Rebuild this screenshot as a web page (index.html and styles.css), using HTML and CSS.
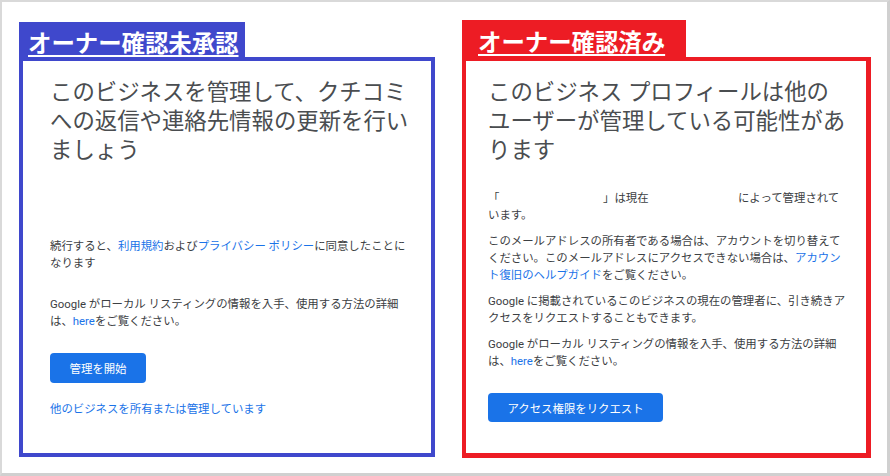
FILE: index.html
```html
<!DOCTYPE html>
<html lang="ja">
<head>
  <meta charset="UTF-8" />
  <meta name="viewport" content="width=device-width, initial-scale=1" />
  <title>オーナー確認</title>
  <link rel="stylesheet" href="styles.css">
</head>
<body>
  <div class="frame">
    <div class="panel panel-blue">
      <div class="tab"><span>オーナー確認未承認</span></div>
      <div class="box">
        <h2>このビジネスを管理して、クチコミへの返信や連絡先情報の更新を行いましょう</h2>
        <div class="body-text">
          <p class="gap-top">続行すると、<a href="#">利用規約</a>および<a href="#">プライバシー ポリシー</a>に同意したことになります</p>
          <p class="gap-para">Google がローカル リスティングの情報を入手、使用する方法の詳細は、<a href="#">here</a>をご覧ください。</p>
        </div>
        <button class="btn btn-start">管理を開始</button>
        <a class="other-link" href="#">他のビジネスを所有または管理しています</a>
      </div>
    </div>
    <div class="panel panel-red">
      <div class="tab"><span>オーナー確認済み</span></div>
      <div class="box">
        <h2>このビジネス プロフィールは他のユーザーが管理している可能性があります</h2>
        <div class="body-text">
          <p>「<span class="blank blank-name"></span>」は現在<span class="blank blank-owner"></span>によって管理されています。</p>
          <p>このメールアドレスの所有者である場合は、アカウントを切り替えてください。このメールアドレスにアクセスできない場合は、<a href="#">アカウント復旧のヘルプガイド</a>をご覧ください。</p>
          <p>Google に掲載されているこのビジネスの現在の管理者に、引き続きアクセスをリクエストすることもできます。</p>
          <p>Google がローカル リスティングの情報を入手、使用する方法の詳細は、<a href="#">here</a>をご覧ください。</p>
        </div>
        <button class="btn btn-request">アクセス権限をリクエスト</button>
      </div>
    </div>
  </div>
</body>
</html>
```

FILE: styles.css
```css
body {
  margin: 0;
  background: #fff;
  font-family: Roboto, "Noto Sans CJK JP", sans-serif;
  color: #3c4043;
}
.frame {
  width: 890px;
  height: 476px;
  box-sizing: border-box;
  border: 2px solid #d9d9d9;
  border-right: 3px solid #d0d0d0;
  border-bottom: 3px solid #d0d0d0;
  padding: 18px 0 0 17px;
  display: flex;
  align-items: flex-start;
  gap: 27px;
}
.panel {
  display: flex;
  flex-direction: column;
  align-items: flex-start;
}
.tab {
  box-sizing: border-box;
  color: #fff;
  font-family: "Noto Sans CJK JP", sans-serif;
  font-size: 23.4px;
  font-weight: 700;
  line-height: 30px;
  white-space: nowrap;
}
.tab span {
  text-decoration: underline;
  text-decoration-thickness: 2px;
  text-underline-offset: 3px;
}
.box {
  box-sizing: border-box;
  background: #fff;
}
.panel-blue {
  margin-top: 2px;
}
.panel-blue .tab {
  background: #3f48cc;
  width: 226px;
  height: 35px;
  padding: 5px 0 0 9px;
}
.panel-blue .box {
  width: 416px;
  height: 400px;
  border: 4px solid #3f48cc;
  padding: 17px 0 0 27px;
}
.panel-red .tab {
  background: #ed1c24;
  width: 224px;
  height: 37px;
  padding: 6px 0 0 16px;
}
.panel-red .box {
  width: 409px;
  height: 401px;
  border: 4px solid #ed1c24;
  border-right-width: 5px;
  border-bottom-width: 5px;
  padding: 17px 0 0 22px;
}
h2 {
  margin: 0;
  width: 362px;
  font-size: 22.4px;
  font-weight: 400;
  line-height: 29px;
  color: #4a4d50;
}
.body-text {
  width: 359px;
  font-size: 11.4px;
  line-height: 17px;
}
.body-text p {
  margin: 9px 0 0;
}
.panel-red .body-text p:first-child {
  margin-top: 25px;
}
.panel-blue .body-text .gap-top {
  margin-top: 73px;
}
.panel-blue .body-text .gap-para {
  margin-top: 24px;
}
a {
  color: #1a73e8;
  text-decoration: none;
}
.blank {
  display: inline-block;
}
.blank-name {
  width: 103.6px;
}
.blank-owner {
  width: 89.4px;
}
.btn {
  display: block;
  border: none;
  border-radius: 4px;
  background: #1a73e8;
  color: #fff;
  font-family: Roboto, "Noto Sans CJK JP", sans-serif;
  font-size: 11.4px;
  font-weight: 400;
  padding: 0 19.5px;
  cursor: pointer;
}
.btn-start {
  height: 30px;
  margin-top: 23px;
}
.btn-request {
  height: 29px;
  margin-top: 23px;
}
.other-link {
  display: block;
  margin-top: 18px;
  font-size: 11.4px;
  line-height: 17px;
}
```
